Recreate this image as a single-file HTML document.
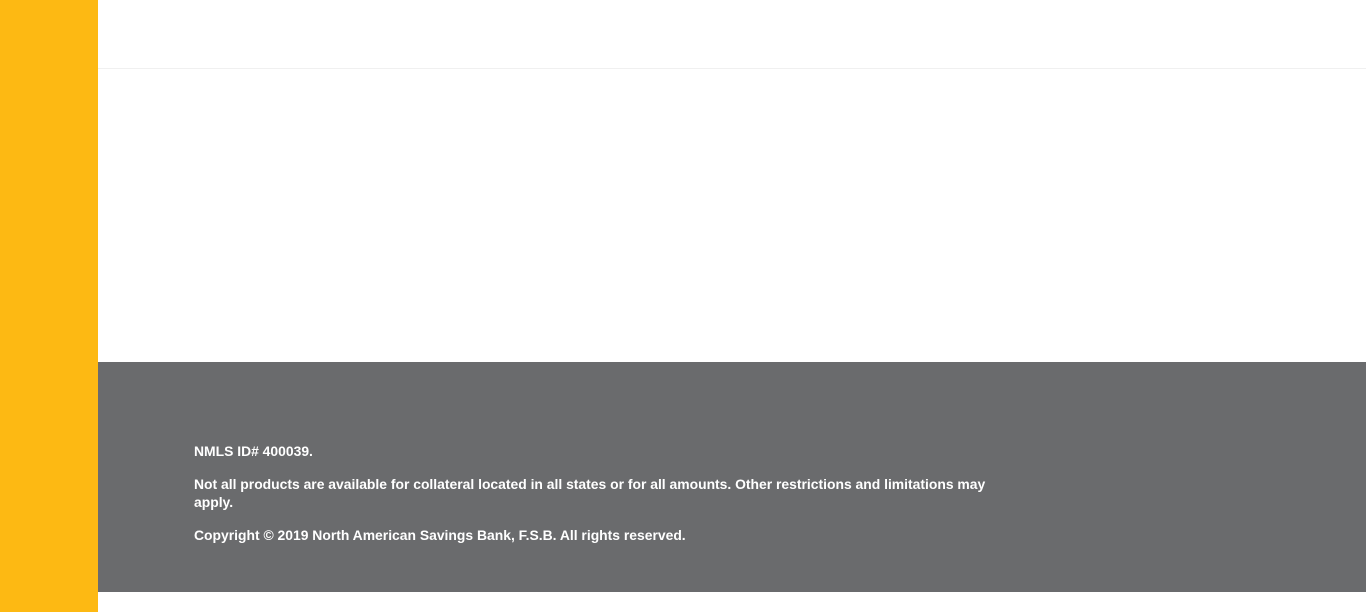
<!DOCTYPE html>
<html><head><meta charset="utf-8"><style>
html,body{margin:0;padding:0;width:1366px;height:612px;overflow:hidden;background:#fff;font-family:"Liberation Sans",sans-serif;}
.bar{position:absolute;left:0;top:0;width:98px;height:612px;background:#fdb913;}
.hdr{position:absolute;left:98px;top:68px;right:0;height:1px;background:#f0f0f0;}
.ft{position:absolute;left:98px;top:362px;right:0;height:230px;background:#6a6b6d;color:#fff;font-weight:bold;font-size:13.9px;}
.ft p{position:absolute;left:96px;margin:0;line-height:18px;white-space:nowrap;}
</style></head><body>
<div class="bar"></div>
<div class="hdr"></div>
<div class="ft">
<p style="top:80px">NMLS ID# 400039.</p>
<p style="top:113px">Not all products are available for collateral located in all states or for all amounts. Other restrictions and limitations may<br>apply.</p>
<p style="top:164px">Copyright © 2019 North American Savings Bank, F.S.B. All rights reserved.</p>
</div>
</body></html>
